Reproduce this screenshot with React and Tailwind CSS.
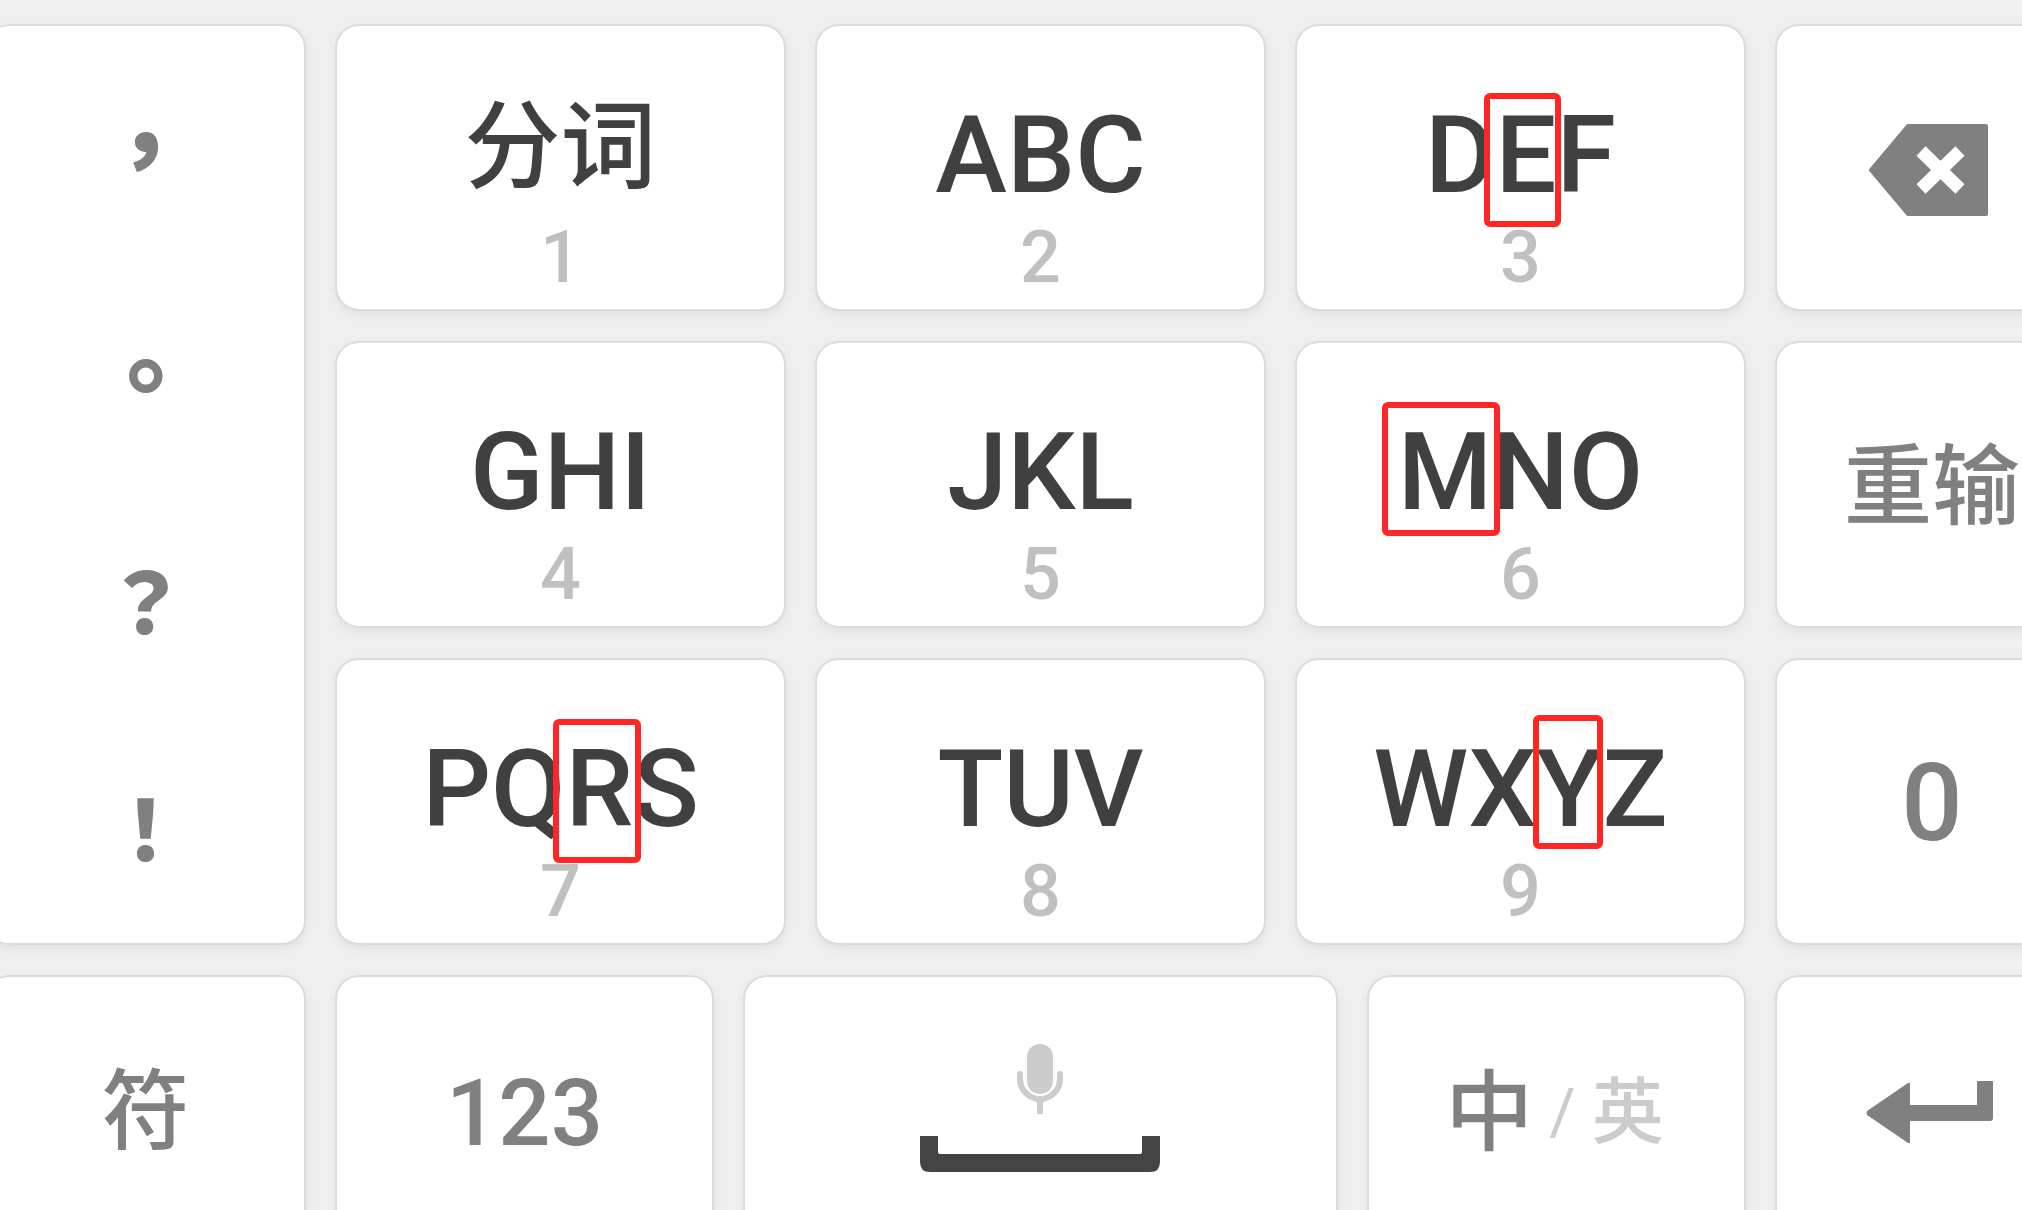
import clsx from "clsx";

const digitKeys = [
  { letters: "分词", digit: "1" },
  { letters: "ABC", digit: "2" },
  { letters: "DEF", digit: "3", marked: "E", frame: "-left-3 -right-1 -top-2 h-[134px]" },
  { letters: "GHI", digit: "4" },
  { letters: "JKL", digit: "5" },
  { letters: "MNO", digit: "6", marked: "M", frame: "-left-4 -right-2 -top-4 h-[134px]" },
  { letters: "PQRS", digit: "7", marked: "R", frame: "-left-3 -right-2 -top-4 h-36" },
  { letters: "TUV", digit: "8" },
  { letters: "WXYZ", digit: "9", marked: "Y", frame: "-left-1 right-0 -top-5 h-[134px]" },
];

const punctuation = [
  { mark: "，", size: "text-[100px]" },
  { mark: "。", size: "text-[100px]" },
  { mark: "？", size: "text-[84px]" },
  { mark: "！", size: "text-[84px]" },
];

const keyBase =
  "rounded-3xl border-2 border-[#dcdcdc] bg-white shadow-[0_4px_10px_rgba(0,0,0,0.06)]";

const Key = ({ className, children, ...props }) => (
  <button
    type="button"
    className={clsx(keyBase, "flex items-center justify-center whitespace-nowrap text-[#808080]", className)}
    {...props}
  >
    {children}
  </button>
);

const Letters = ({ letters, marked, frame }) => {
  if (!marked) return letters;
  const [before, after] = letters.split(marked);
  return (
    <>
      {before}
      <span className="relative inline-block">
        {marked}
        <span className={clsx("absolute rounded-md border-6 border-[#ff2626]", frame)} />
      </span>
      {after}
    </>
  );
};

const DigitKey = ({ letters, digit, marked, frame }) => (
  <button type="button" className={clsx(keyBase, "flex flex-col items-center gap-[13px] pt-[75px]")}>
    <span
      className={clsx(
        "whitespace-nowrap leading-[108px] text-[#404040]",
        digit === "1" ? "-mt-2 mb-2 text-8xl leading-[108px]" : "text-[108px]"
      )}
    >
      <Letters letters={letters} marked={marked} frame={frame} />
    </span>
    <span className="text-7xl leading-[72px] text-[#c0c0c0]">{digit}</span>
  </button>
);

const BackspaceIcon = () => (
  <svg width="120" height="92" viewBox="0 0 120 92" aria-hidden="true">
    <path
      d="M2 46 L39 2 H117 V90 H39 Z"
      fill="#808080"
      stroke="#808080"
      strokeWidth="4"
      strokeLinejoin="round"
    />
    <path d="M52 27 L91 65 M91 27 L52 65" stroke="#fff" strokeWidth="13" />
  </svg>
);

const MicIcon = () => (
  <svg width="46" height="70" viewBox="0 0 46 70" aria-hidden="true">
    <rect x="10" y="0" width="26" height="50" rx="13" fill="#ccc" />
    <path
      d="M3 30 V35 A20 20 0 0 0 43 35 V30"
      fill="none"
      stroke="#ccc"
      strokeWidth="6"
      strokeLinecap="round"
    />
    <path d="M23 55 V70" stroke="#ccc" strokeWidth="6" />
  </svg>
);

const SpaceIcon = () => (
  <svg width="240" height="36" viewBox="0 0 240 36" aria-hidden="true">
    <path
      d="M0 0 H18 V16 Q18 18 20 18 H220 Q222 18 222 16 V0 H240 V26 Q240 36 230 36 H10 Q0 36 0 26 Z"
      fill="#444"
    />
  </svg>
);

const EnterIcon = () => (
  <svg width="127" height="62" viewBox="0 0 127 62" aria-hidden="true">
    <path
      d="M1 30 Q0 32 1 34 L42 62 H44 V40 H124 Q127 40 127 37 V0 H111 V24 H44 V2 H42 Z"
      fill="#808080"
    />
  </svg>
);

const App = () => (
  <main className="h-screen overflow-hidden bg-[#efefef] pt-6 font-['Roboto','Noto_Sans_CJK_SC',sans-serif] font-medium">
    {/* the keyboard bleeds past both sides and the bottom of the window */}
    <div className="-ml-[15px] -mr-[67px] grid grid-cols-[321fr_1411fr_314fr] gap-x-[29px] gap-y-[30px]">
      <div className={clsx(keyBase, "flex flex-col justify-center")}>
        {punctuation.map(({ mark, size }) => (
          <button
            key={mark}
            type="button"
            className={clsx(
              "h-[227px] font-['Noto_Sans_CJK_TC',sans-serif] font-black leading-[88px] text-[#808080]",
              size
            )}
          >
            {mark}
          </button>
        ))}
      </div>

      <div className="grid auto-rows-[287px] grid-cols-3 gap-x-[29px] gap-y-[30px]">
        {digitKeys.map((item) => (
          <DigitKey key={item.digit} {...item} />
        ))}
      </div>

      <div className="grid auto-rows-[287px] gap-y-[30px]">
        <Key className="pr-1.5 pt-1" aria-label="Backspace">
          <BackspaceIcon />
        </Key>
        <Key className="pt-1 text-[88px] leading-[88px]">重输</Key>
        <Key className="pt-0.5 text-[108px] leading-[108px]">0</Key>
      </div>

      <Key className="h-[274px] text-[88px] leading-[88px]">符</Key>

      <div className="grid grid-cols-[379fr_595fr_379fr] gap-x-[29px]">
        <Key className="pt-1 text-[92px] leading-[96px]">123</Key>
        <Key className="flex-col gap-[22px] pb-2 pr-0.5" aria-label="Space">
          <MicIcon />
          <SpaceIcon />
        </Key>
        <Key className="gap-4 pr-1 pt-0.5 leading-[88px]">
          <span className="text-[88px]">中</span>
          <span className="text-[64px] leading-[88px] font-normal text-[#ccc]">/</span>
          <span className="text-7xl leading-[88px] text-[#ccc]">英</span>
        </Key>
      </div>

      <Key className="pr-1.5" aria-label="Enter">
        <EnterIcon />
      </Key>
    </div>
  </main>
);

export default App;
